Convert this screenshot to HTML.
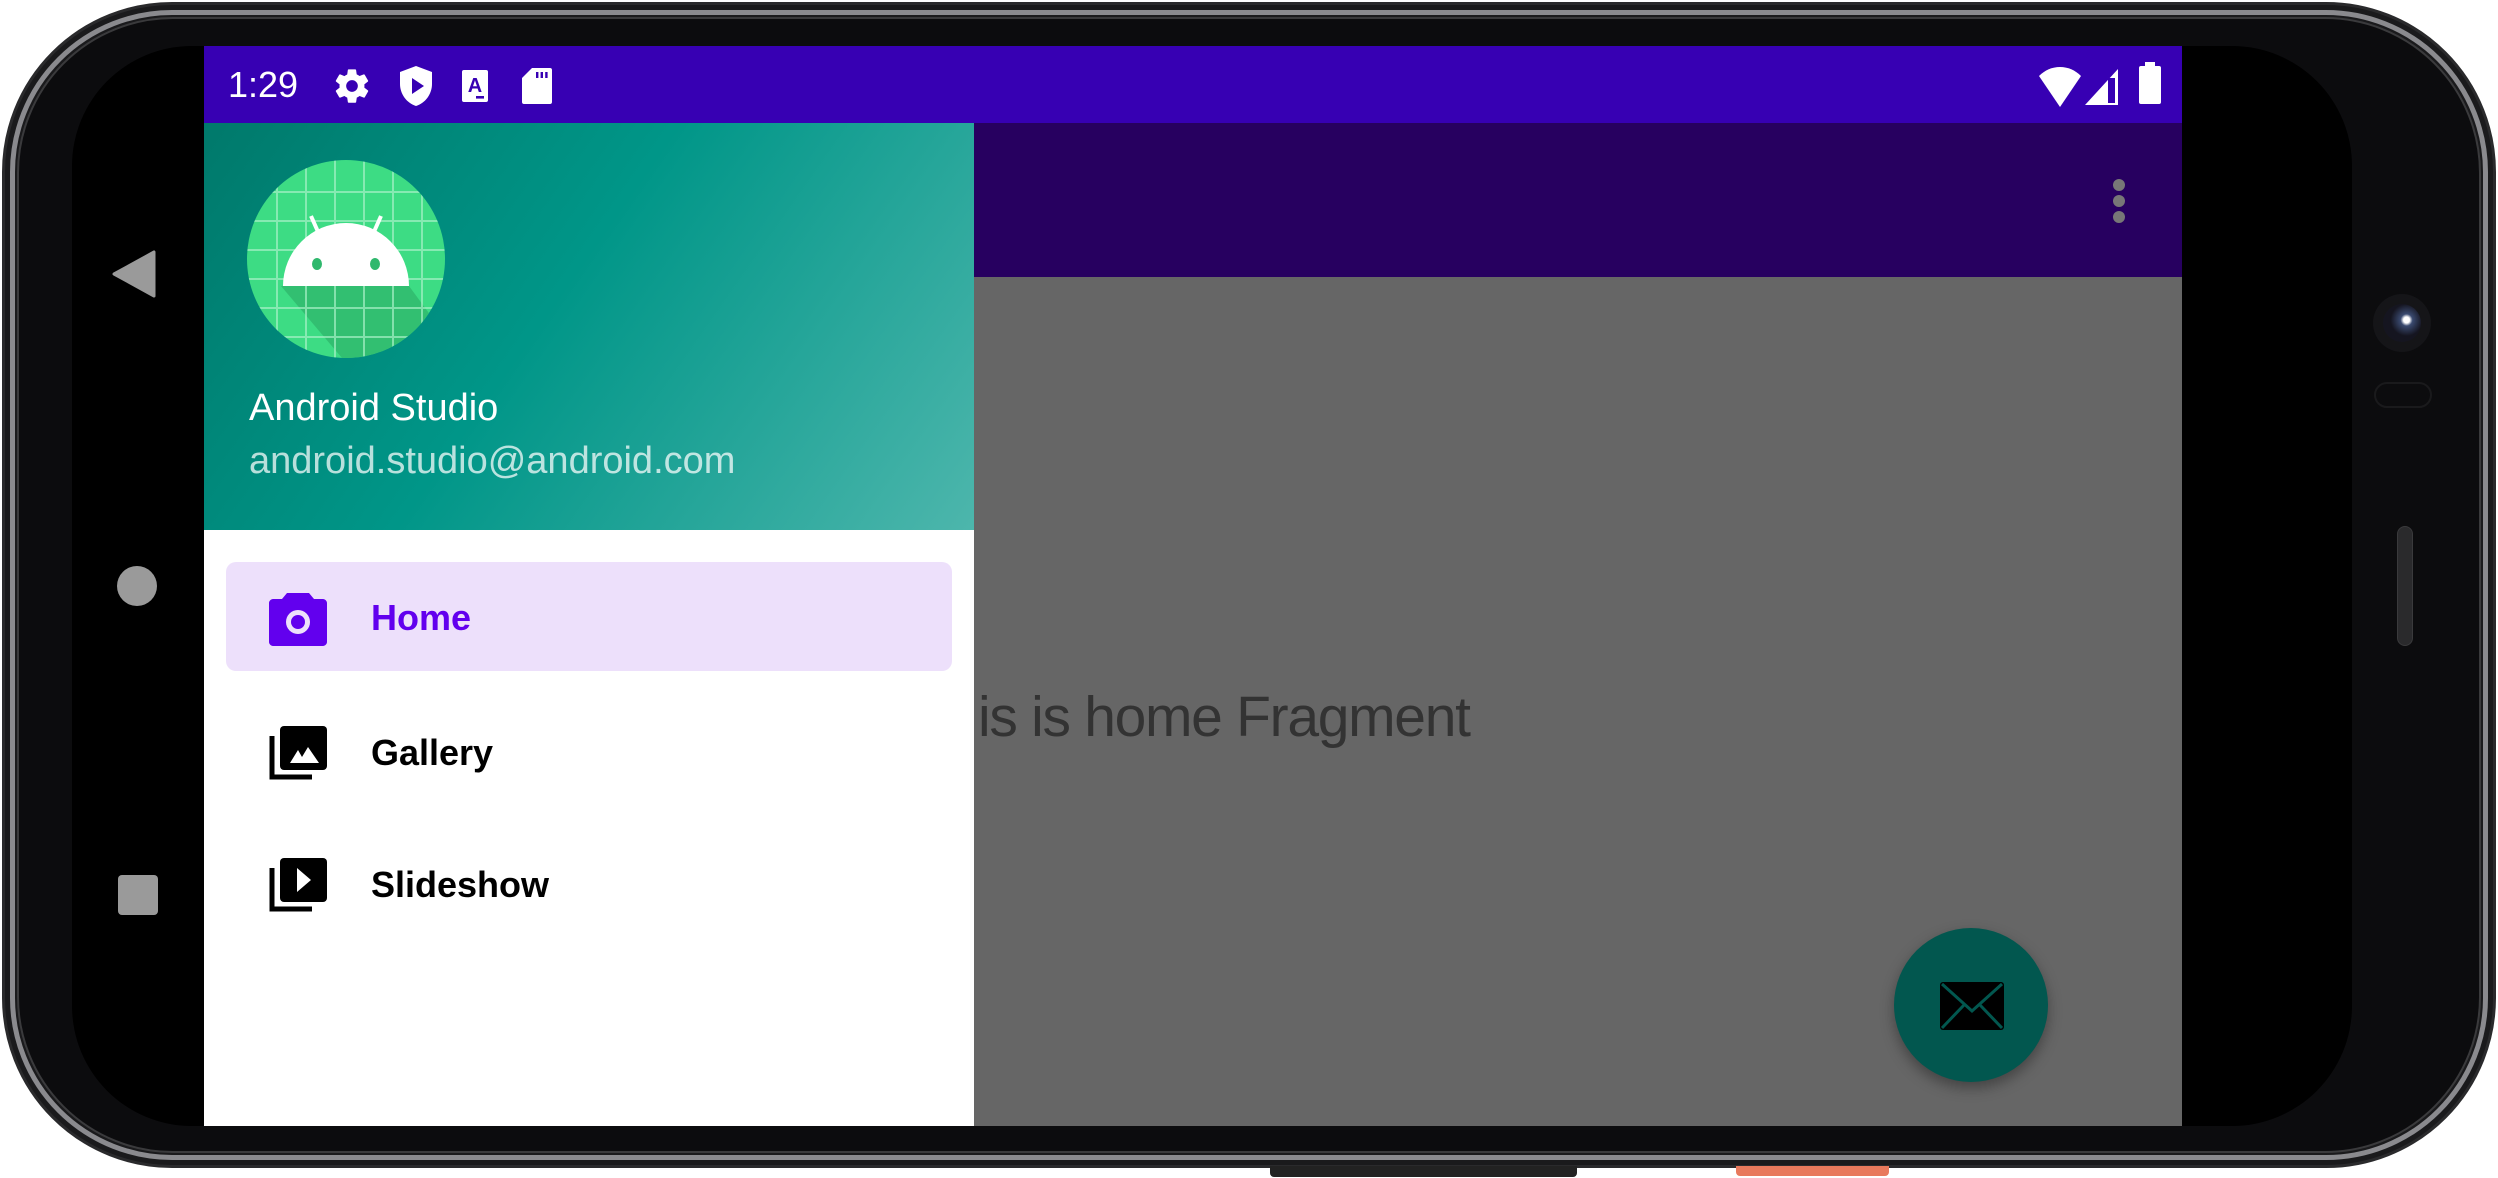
<!DOCTYPE html>
<html><head><meta charset="utf-8"><style>
*{margin:0;padding:0;box-sizing:border-box}
body{width:2498px;height:1178px;background:#fff;position:relative;overflow:hidden;font-family:"Liberation Sans",sans-serif}
.a{position:absolute}
</style></head><body>
<!-- phone body -->
<div class="a" style="left:2px;top:2px;width:2494px;height:1166px;border-radius:170px;background:#1a1a1c;border:3px solid #2a2a2c"></div>
<div class="a" style="left:10px;top:10px;width:2478px;height:1150px;border-radius:162px;border:5px solid #8a8a8e"></div>
<div class="a" style="left:17px;top:17px;width:2464px;height:1136px;border-radius:156px;background:#0c0c0e;border:2px solid #3a3a3c"></div>
<div class="a" style="left:72px;top:46px;width:2280px;height:1080px;border-radius:120px;background:#000"></div>
<!-- bottom buttons -->
<div class="a" style="left:1270px;top:1166px;width:307px;height:11px;background:#222;border-radius:0 0 4px 4px"></div>
<div class="a" style="left:1736px;top:1166px;width:153px;height:10px;background:#e8795c;border-radius:0 0 4px 4px"></div>
<!-- camera / speaker -->
<div class="a" style="left:2373px;top:294px;width:58px;height:58px;border-radius:50%;background:#151518"></div>
<div class="a" style="left:2383px;top:304px;width:38px;height:38px;border-radius:50%;background:radial-gradient(circle at 62% 42%,#fff 0 3px,#3a4a70 6px,#151520 16px)"></div>
<div class="a" style="left:2374px;top:382px;width:58px;height:26px;border-radius:13px;border:2px solid #1a1a1c"></div>
<div class="a" style="left:2397px;top:526px;width:16px;height:120px;border-radius:8px;background:#2a2a2c;border:1px solid #3a3a3c"></div>
<!-- nav buttons -->
<svg class="a" style="left:112px;top:250px" width="44" height="48"><polygon points="42,2 42,46 2,24" fill="#9a9a9a" stroke="#9a9a9a" stroke-width="3" stroke-linejoin="round"/></svg>
<div class="a" style="left:117px;top:566px;width:40px;height:40px;border-radius:50%;background:#9a9a9a"></div>
<div class="a" style="left:118px;top:875px;width:40px;height:40px;border-radius:4px;background:#9a9a9a"></div>

<!-- screen -->
<div class="a" style="left:204px;top:46px;width:1978px;height:1080px;background:#666;overflow:hidden">
  <div class="a" style="left:0;top:0;width:1978px;height:77px;background:#3700b3"></div>
  <div class="a" style="left:0;top:77px;width:1978px;height:154px;background:#270060"></div>
  <div class="a" style="left:1909px;top:133px;width:12px;height:12px;border-radius:50%;background:#777"></div>
  <div class="a" style="left:1909px;top:149px;width:12px;height:12px;border-radius:50%;background:#777"></div>
  <div class="a" style="left:1909px;top:165px;width:12px;height:12px;border-radius:50%;background:#777"></div>
  <div class="a" style="left:774px;top:638px;font-size:57px;color:#333;white-space:nowrap;letter-spacing:-1.3px">is is home Fragment</div>
  <!-- FAB -->
  <div class="a" style="left:1690px;top:882px;width:154px;height:154px;border-radius:50%;background:#02574f;box-shadow:0 6px 14px rgba(0,0,0,.35)"></div>
  <svg class="a" style="left:1736px;top:936px" width="64" height="48" viewBox="0 0 64 48"><rect x="0" y="0" width="64" height="48" rx="3" fill="#000"/><polyline points="2,2 32,29 62,2" fill="none" stroke="#02574f" stroke-width="3"/><line x1="2" y1="46" x2="24" y2="23" stroke="#02574f" stroke-width="3"/><line x1="62" y1="46" x2="40" y2="23" stroke="#02574f" stroke-width="3"/></svg>
  <!-- status bar -->
  <div class="a" style="left:24px;top:18px;font-size:36px;color:#fff">1:29</div>
  <svg class="a" style="left:128px;top:20px" width="40" height="40" viewBox="0 0 24 24"><path fill="#fff" d="M19.4 13c.04-.3.06-.64.06-1s-.02-.7-.06-1l2.1-1.650c.2-.15.24-.42.12-.64l-2-3.46c-.12-.22-.38-.3-.6-.22l-2.5 1c-.52-.4-1.080-.73-1.7-.98l-.37-2.65A.49.49 0 0 0 14 2h-4c-.25 0-.46.18-.49.42l-.38 2.650c-.61.25-1.17.59-1.69.98l-2.49-1c-.23-.09-.49 0-.61.22l-2 3.46c-.13.22-.07.49.12.64L4.57 11c-.04.3-.07.65-.07 1s.03.7.07 1l-2.11 1.65c-.19.15-.24.42-.12.64l2 3.46c.12.22.39.3.61.22l2.49-1c.52.4 1.08.73 1.69.98l.38 2.65c.03.24.24.42.49.42h4c.25 0 .46-.18.49-.42l.38-2.65c.61-.25 1.17-.58 1.69-.98l2.490 1c.23.09.49 0 .61-.22l2-3.46c.12-.22.07-.49-.12-.64L19.4 13zM12 15.5A3.5 3.5 0 1 1 12 8.5a3.5 3.5 0 0 1 0 7z"/></svg>
  <svg class="a" style="left:192px;top:18px" width="40" height="44" viewBox="0 0 20 22"><path fill="#fff" d="M10 1 2 4v6c0 5 3.4 9.6 8 11 4.6-1.4 8-6 8-11V4z"/><path fill="#3700b3" d="M8 7v8l6-4z"/></svg>
  <svg class="a" style="left:256px;top:22px" width="30" height="36" viewBox="0 0 15 18"><rect x="1" y="1" width="13" height="16" rx="1" fill="#fff"/><text x="7.5" y="12" font-size="10" font-weight="bold" text-anchor="middle" fill="#3700b3" font-family="Liberation Sans">A</text><rect x="8" y="14" width="4" height="1.3" fill="#3700b3"/></svg>
  <svg class="a" style="left:316px;top:20px" width="34" height="40" viewBox="0 0 17 20"><path fill="#fff" d="M6 1h9c.6 0 1 .4 1 1v16c0 .6-.4 1-1 1H2c-.6 0-1-.4-1-1V6z"/><rect x="8" y="3" width="1.2" height="3" fill="#3700b3"/><rect x="10.3" y="3" width="1.2" height="3" fill="#3700b3"/><rect x="12.6" y="3" width="1.2" height="3" fill="#3700b3"/></svg>
  <svg class="a" style="left:1834px;top:20px" width="44" height="42" viewBox="0 0 44 42"><path fill="#fff" d="M1 10C7 4 14 1 22 1s15 3 21 9L22 41z"/></svg>
  <svg class="a" style="left:1880px;top:22px" width="36" height="38" viewBox="0 0 36 38"><path fill="#fff" d="M34 1v36H1z"/><rect x="24" y="10" width="7" height="25" fill="#3700b3"/></svg>
  <div class="a" style="left:1935px;top:20px;width:22px;height:38px;background:#fff;border-radius:2px"></div>
  <div class="a" style="left:1941px;top:16px;width:10px;height:6px;background:#fff"></div>

  <!-- drawer -->
  <div class="a" style="left:0;top:77px;width:770px;height:1003px;background:#fff">
    <div class="a" style="left:0;top:0;width:770px;height:407px;background:linear-gradient(125deg,#00796b 0%,#009688 45%,#4db6ac 100%)"></div>
    <svg class="a" style="left:43px;top:37px" width="198" height="198" viewBox="0 0 198 198">
      <defs><clipPath id="c"><circle cx="99" cy="99" r="99"/></clipPath></defs>
      <g clip-path="url(#c)">
        <rect width="198" height="198" fill="#3ddc84"/>
        <polygon points="34,126 162,126 198,175 198,198 95,198" fill="#2fb86d" opacity=".8"/>
        <g stroke="#a6f0c6" stroke-width="2" opacity=".7">
          <line x1="0" y1="32" x2="198" y2="32"/><line x1="0" y1="61" x2="198" y2="61"/><line x1="0" y1="90" x2="198" y2="90"/><line x1="0" y1="119" x2="198" y2="119"/><line x1="0" y1="148" x2="198" y2="148"/><line x1="0" y1="177" x2="198" y2="177"/>
          <line x1="30" y1="0" x2="30" y2="198"/><line x1="59" y1="0" x2="59" y2="198"/><line x1="88" y1="0" x2="88" y2="198"/><line x1="117" y1="0" x2="117" y2="198"/><line x1="146" y1="0" x2="146" y2="198"/><line x1="175" y1="0" x2="175" y2="198"/>
        </g>
        <path d="M36 126a63 63 0 0 1 126 0z" fill="#fff"/>
        <line x1="64" y1="56" x2="72" y2="74" stroke="#fff" stroke-width="4"/>
        <line x1="134" y1="56" x2="126" y2="74" stroke="#fff" stroke-width="4"/>
        <ellipse cx="70" cy="104" rx="5" ry="6" fill="#2fb86d"/>
        <ellipse cx="128" cy="104" rx="5" ry="6" fill="#2fb86d"/>
      </g>
    </svg>
    <div class="a" style="left:45px;top:264px;font-size:38px;color:#fff">Android Studio</div>
    <div class="a" style="left:45px;top:317px;font-size:38px;color:rgba(255,255,255,.72)">android.studio@android.com</div>

    <div class="a" style="left:22px;top:439px;width:726px;height:109px;background:#ede0fb;border-radius:10px"></div>
    <svg class="a" style="left:65px;top:467px" width="58" height="56" viewBox="0 0 58 56"><path fill="#6200ee" d="M18 3h22l5 6h9c2 0 4 2 4 4v39c0 2-2 4-4 4H4c-2 0-4-2-4-4V13c0-2 2-4 4-4h9z"/><circle cx="29" cy="32" r="12" fill="#ede0fb"/><circle cx="29" cy="32" r="7" fill="#6200ee"/></svg>
    <div class="a" style="left:167px;top:474px;font-size:36px;font-weight:bold;color:#6200ee">Home</div>

    <svg class="a" style="left:65px;top:603px" width="58" height="56" viewBox="0 0 58 56"><path d="M3 10v41h40" fill="none" stroke="#000" stroke-width="5"/><rect x="11" y="0" width="47" height="44" rx="4" fill="#000"/><polygon points="21,37 29,24 33,31 39,21 50,37" fill="#fff"/></svg>
    <div class="a" style="left:167px;top:609px;font-size:36px;font-weight:bold;color:#000">Gallery</div>

    <svg class="a" style="left:65px;top:735px" width="58" height="56" viewBox="0 0 58 56"><path d="M3 10v41h40" fill="none" stroke="#000" stroke-width="5"/><rect x="11" y="0" width="47" height="44" rx="4" fill="#000"/><polygon points="28,10 42,22 28,34" fill="#fff"/></svg>
    <div class="a" style="left:167px;top:741px;font-size:36px;font-weight:bold;color:#000">Slideshow</div>
  </div>
</div>
</body></html>
